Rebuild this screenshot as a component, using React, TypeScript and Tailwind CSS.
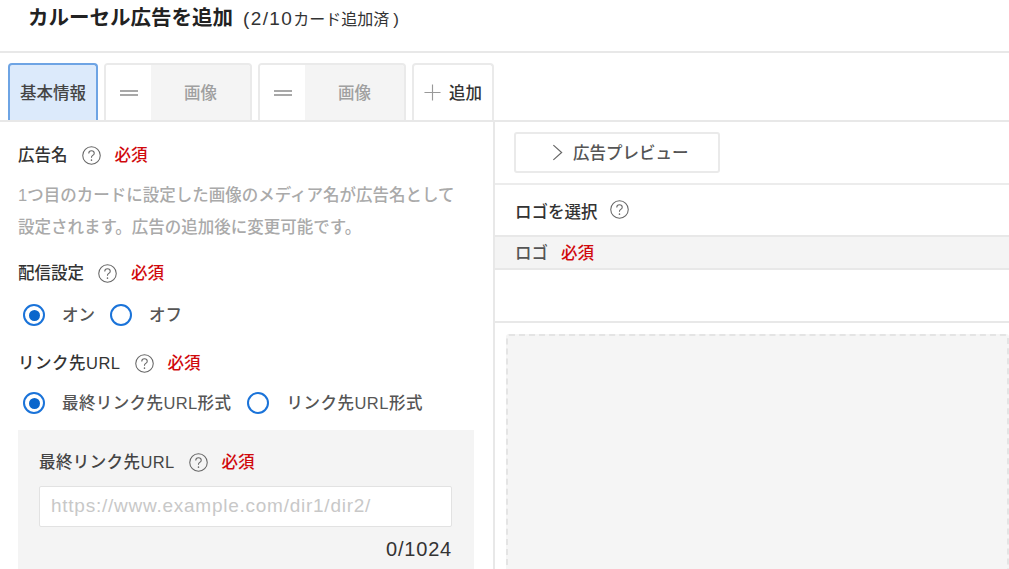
const HelpIcon = ({ className = '' }: { className?: string }) => (
  <svg viewBox="0 0 18 18" className={`w-[19px] h-[19px] flex-none ${className}`} fill="none">
    <circle cx="9" cy="9" r="8.3" stroke="#666" strokeWidth="1" />
    <path
      d="M6.4 7c0-1.5 1.1-2.5 2.6-2.5s2.6 1 2.6 2.3c0 1.1-.7 1.6-1.4 2.1-.7.5-1.2 1-1.2 1.8v.5"
      stroke="#666"
      strokeWidth="1"
    />
    <circle cx="9" cy="13.4" r=".75" fill="#666" />
  </svg>
);

const Required = () => <span className="text-[16.5px] font-medium text-[#d0090c]">必須</span>;

const Radio = ({ checked, label, labelClass }: { checked?: boolean; label: string; labelClass: string }) => (
  <div className="flex items-center">
    <span className="flex items-center justify-center w-[22px] h-[22px] rounded-full border-2 border-[#1a73d9] bg-white flex-none">
      {checked && <span className="w-[11px] h-[11px] rounded-full bg-[#0a66cc]"></span>}
    </span>
    <span className={`text-[16.5px] font-medium text-[#555] ${labelClass}`}>{label}</span>
  </div>
);

const ImageTab = () => (
  <div className="flex w-[148px] h-[57px] rounded-t-[4px] border-2 border-b-0 border-[#eaeaea] overflow-hidden">
    <div className="flex items-center justify-center w-[45px] bg-white flex-none">
      <div className="w-[18px] h-[6px] border-y-2 border-[#a8a8a8]"></div>
    </div>
    <div className="flex-1 flex items-center justify-center pt-[2px] bg-[#f4f4f4] text-[16.5px] font-medium text-[#a0a0a0]">
      画像
    </div>
  </div>
);

const App = () => {
  return (
    <div
      className="w-[1009px] h-[569px] overflow-hidden bg-white text-[#333]"
      style={{ fontFamily: '"Liberation Sans", "Noto Sans CJK JP", sans-serif' }}
    >
      <div className="flex items-baseline h-[53px] pl-[28px] pt-[3px] border-b-2 border-[#e8e8e8]">
        <span className="text-[20.5px] leading-[30px] font-bold text-[#222]">カルーセル広告を追加</span>
        <span className="ml-[10px] text-[19px] tracking-[1.4px] text-[#333]">(2/10</span>
        <span className="text-[16px] text-[#333]">カード追加済</span>
        <span className="ml-[4px] text-[17px] text-[#333]">)</span>
      </div>

      <div className="flex items-end gap-[6px] h-[69px] pl-[8px] border-b-2 border-[#e8e8e8]">
        <div className="flex items-center justify-center pt-[2px] w-[90px] h-[57px] rounded-t-[4px] border-2 border-b-0 border-[#6ea4e4] bg-[#dceafb] text-[16.5px] font-medium text-[#444]">
          基本情報
        </div>
        <ImageTab />
        <ImageTab />
        <div className="flex items-center justify-center gap-[8px] pt-[2px] w-[82px] h-[57px] rounded-t-[4px] border-2 border-b-0 border-[#eaeaea]">
          <svg viewBox="0 0 18 18" className="w-[17px] h-[17px] -mt-[2px]" fill="none">
            <path d="M9 0.5v17M0.5 9h17" stroke="#999" strokeWidth="1.2" />
          </svg>
          <span className="text-[16.5px] font-medium text-[#333]">追加</span>
        </div>
      </div>

      <div className="flex">
        <div className="w-[495px] flex-none pl-[18px] border-r-2 border-[#e8e8e8]">
          <div className="flex items-center gap-[14px] mt-[21px] h-[24px]">
            <span className="text-[16.5px] font-medium">広告名</span>
            <HelpIcon />
            <Required />
          </div>
          <p className="mt-[12px] w-[450px] text-[16.5px] leading-[32px] font-medium text-[#aaa]">
            1つ目のカードに設定した画像のメディア名が広告名として設定されます。広告の追加後に変更可能です。
          </p>
          <div className="flex items-center gap-[14px] mt-[18px] h-[24px]">
            <span className="text-[16.5px] font-medium">配信設定</span>
            <HelpIcon />
            <Required />
          </div>
          <div className="flex items-center mt-[18px] pl-[5px] h-[24px]">
            <Radio checked label="オン" labelClass="ml-[17px] mr-[15px]" />
            <Radio label="オフ" labelClass="ml-[17px]" />
          </div>
          <div className="flex items-center gap-[14px] mt-[24px] h-[24px]">
            <span className="text-[16.5px] font-medium tracking-[.5px]">リンク先URL</span>
            <HelpIcon />
            <Required />
          </div>
          <div className="flex items-center mt-[16px] pl-[5px] h-[24px]">
            <Radio checked label="最終リンク先URL形式" labelClass="ml-[17px] mr-[16px] tracking-[.4px]" />
            <Radio label="リンク先URL形式" labelClass="ml-[17px] tracking-[.5px]" />
          </div>
          <div className="w-[456px] h-[160px] mt-[15px] px-[21px] pt-[20px] bg-[#f4f4f4]">
            <div className="flex items-center gap-[14px] h-[24px]">
              <span className="text-[16.5px] font-medium tracking-[.4px] text-[#444]">最終リンク先URL</span>
              <HelpIcon />
              <Required />
            </div>
            <div className="flex items-center w-[413px] h-[41px] mt-[12px] px-[11px] bg-white border border-[#e2e2e2] rounded-[2px] text-[19px] tracking-[.75px] text-[#c8c8c8]">
              https://www.example.com/dir1/dir2/
            </div>
            <div className="mt-[10px] w-[413px] text-right text-[20px] tracking-[.8px] leading-[24px] text-[#333]">0/1024</div>
          </div>
        </div>

        <div className="flex-1 min-w-0">
          <div className="h-[63px] pl-[19px] pt-[10px] border-b-2 border-[#ececec]">
            <div className="flex items-center w-[206px] h-[41px] pl-[36px] border-2 border-[#eaeaea] rounded-[3px]">
              <svg viewBox="0 0 12 18" className="w-[11px] h-[17px] flex-none" fill="none">
                <path d="M1.5 1l9 8-9 8" stroke="#666" strokeWidth="1.3" />
              </svg>
              <span className="ml-[10px] pt-[2px] text-[16.5px] font-medium text-[#555]">広告プレビュー</span>
            </div>
          </div>
          <div className="flex items-center gap-[12px] h-[52px] pl-[20px] pt-[4px] border-b-2 border-[#e8e8e8]">
            <span className="text-[16.5px] font-medium text-[#333]">ロゴを選択</span>
            <HelpIcon className="-mt-[6px]" />
          </div>
          <div className="flex items-center gap-[13px] h-[33px] pl-[20px] pt-[2px] bg-[#f4f4f4] border-b-2 border-[#e8e8e8]">
            <span className="text-[16.5px] font-medium text-[#555]">ロゴ</span>
            <Required />
          </div>
          <div className="h-[53px] border-b-2 border-[#e8e8e8]"></div>
          <div className="ml-[11px] mt-[11px] h-[300px] bg-[#f5f5f5] border-2 border-dashed border-[#e4e4e4] rounded-[3px]"></div>
        </div>
      </div>
    </div>
  );
};

export default App;
